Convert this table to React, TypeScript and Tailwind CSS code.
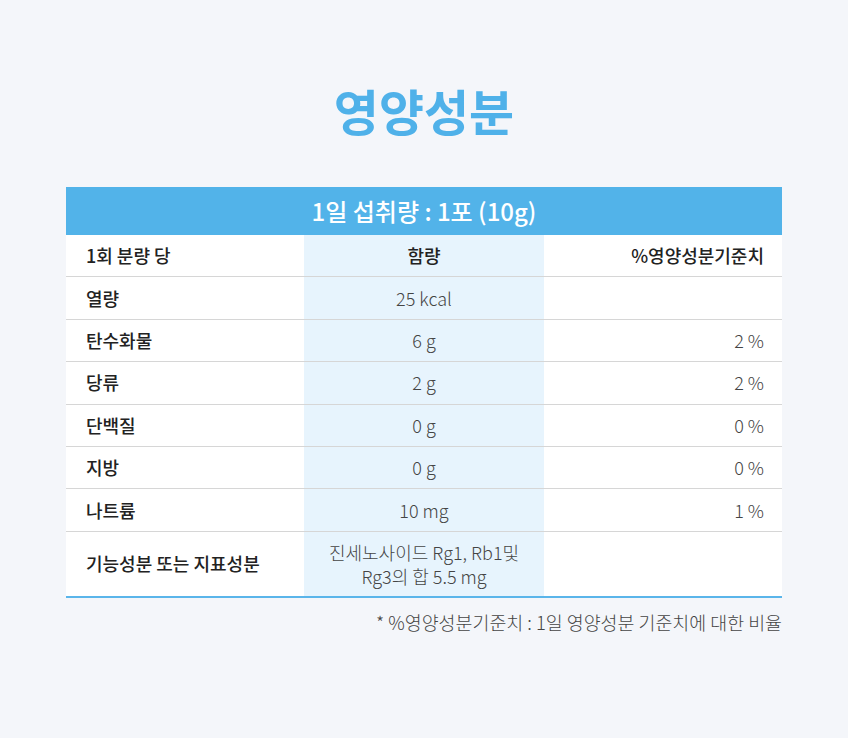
const rows = [
  { name: "열량", amount: "25 kcal", pct: "" },
  { name: "탄수화물", amount: "6 g", pct: "2 %" },
  { name: "당류", amount: "2 g", pct: "2 %" },
  { name: "단백질", amount: "0 g", pct: "0 %" },
  { name: "지방", amount: "0 g", pct: "0 %" },
  { name: "나트륨", amount: "10 mg", pct: "1 %" },
];

export default function App() {
  return (
    <main
      className="min-h-[738px] w-full bg-[#f4f6fa] pt-[80px] text-[#333]"
      style={{ fontFamily: '"Noto Sans CJK KR", "Noto Sans", sans-serif' }}
    >
      <h1 className="text-center text-[49px] font-bold leading-[60px] text-[#4fb1e9]">영양성분</h1>

      <div className="mx-auto mt-[47px] w-[716px]">
        <div className="flex h-[48px] items-center justify-center bg-[#52b3e9] text-[24px] font-medium text-white">
          1일 섭취량 : 1포 (10g)
        </div>

        <div className="grid grid-cols-[238px_240px_238px] border-b-2 border-[#5ab5ea] bg-white text-[18px]">
          <div className="flex h-[42.4px] items-center border-b border-[#d6d6d6] px-[20px] font-medium text-[#222]">1회 분량 당</div>
          <div className="flex h-[42.4px] items-center justify-center border-b border-[#d6d6d6] bg-[#e7f4fd] font-medium text-[#222]">함량</div>
          <div className="flex h-[42.4px] items-center justify-end border-b border-[#d6d6d6] px-[18px] font-medium text-[#222]">%영양성분기준치</div>

          {rows.map((r) => (
            <Row key={r.name} {...r} />
          ))}

          <div className="flex h-[64px] items-center px-[20px] font-medium text-[#222]">기능성분 또는 지표성분</div>
          <div className="flex h-[64px] flex-col items-center justify-center bg-[#e7f4fd] text-center font-light leading-[24px] text-[#444]">
            <span>진세노사이드 Rg1, Rb1및</span>
            <span>Rg3의 합 5.5 mg</span>
          </div>
          <div className="h-[64px]" />
        </div>

        <p className="mt-[11px] text-right text-[18.4px] font-light text-[#444]">
          * %영양성분기준치 : 1일 영양성분 기준치에 대한 비율
        </p>
      </div>
    </main>
  );
}

function Row({ name, amount, pct }: { name: string; amount: string; pct: string }) {
  return (
    <>
      <div className="flex h-[42.4px] items-center border-b border-[#d6d6d6] px-[20px] font-medium text-[#222]">{name}</div>
      <div className="flex h-[42.4px] items-center justify-center border-b border-[#d6d6d6] bg-[#e7f4fd] font-light text-[#444]">{amount}</div>
      <div className="flex h-[42.4px] items-center justify-end border-b border-[#d6d6d6] px-[18px] font-light text-[#444]">{pct}</div>
    </>
  );
}
